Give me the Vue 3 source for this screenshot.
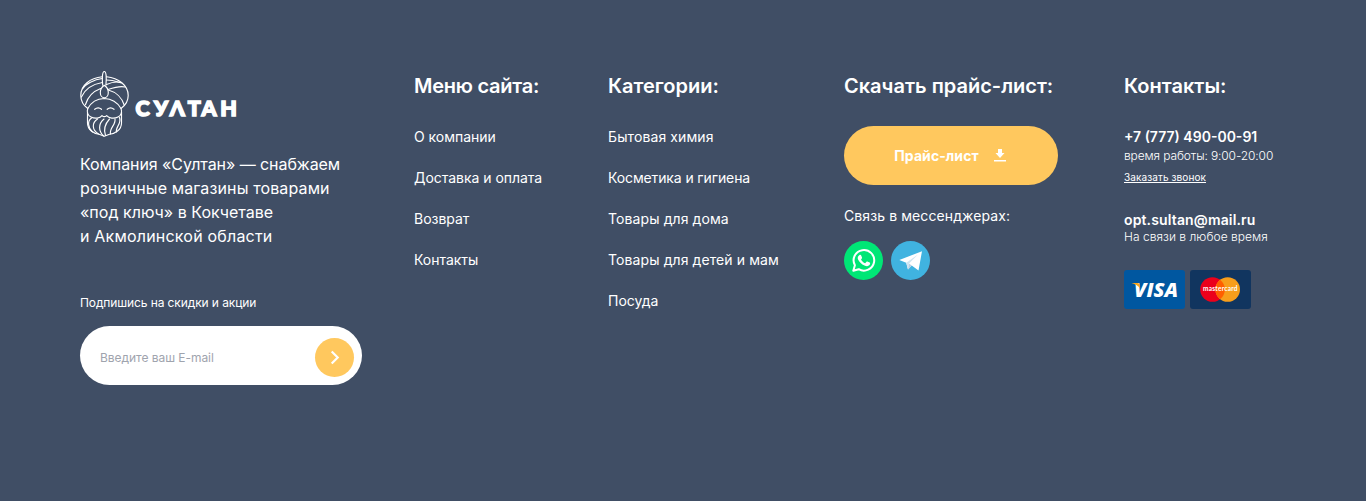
<script setup>
const siteMenu = ['О компании', 'Доставка и оплата', 'Возврат', 'Контакты']
const categories = ['Бытовая химия', 'Косметика и гигиена', 'Товары для дома', 'Товары для детей и мам', 'Посуда']
</script>

<template>
  <footer class="footer">
    <section class="about">
      <svg class="logo" width="158" height="68" viewBox="0 0 158 68" role="img" aria-label="СУЛТАН">
        <g fill="none" stroke="#fff" stroke-width="1.15" stroke-linecap="round" stroke-linejoin="round">
          <path d="M22.3 6.8C10 8 .8 15.300.8 25.500C.8 31 3.500 35.500 7.800 38.500C11 32.500 16 28.800 24.300 28.500C32.500 28.800 37.500 32.500 41 38.500C45.300 35.500 48.200 31 48.200 25.500C48.200 15.300 38.500 8 26.500 6.800" />
          <path d="M22.700 15.200C22 8 22.200 1.500 24.300 1.500S26.600 8 25.900 15.200" />
          <path d="M24.300 15.300C21.800 17 20.300 19.500 20.300 22.500S22 27.800 24.300 27.800S28.300 25.500 28.300 22.500S26.800 17 24.300 15.300Z" />
          <path d="M22.300 8.500C14 9.500 5.500 14 2.400 19" />
          <path d="M22.300 12.500C13.500 14 5 19 1.400 27" />
          <path d="M20.700 18.500C14 21 8 26 5.500 34.500" />
          <path d="M26.500 10C34 10 39 12.500 41.500 13" />
          <path d="M26.500 14.500C31 12.500 37 11.500 41 12.500" />
          <path d="M28 19.500C34 17.500 40 15.500 45 17" />
          <path d="M28.300 20C36 22 42 28 44.200 35" />
          <path d="M7.800 38.500C6.500 42 8 45.500 11 47C15 49 20 48.300 22 45.600Q24.300 47.800 26.600 45.600C29 48.300 34 49 38 47C41 45.500 42.300 42 41 38.500" />
          <path d="M14.700 39.300Q18.200 36.500 21.500 39.300M27.200 39.300Q30.500 36.500 34 39.300" />
          <path d="M7.500 42V53C7.500 60 14 63.500 19 64.300L24.300 66.300L29.500 64.300C35 63.500 41.500 60 41.500 53V42" />
          <path d="M11.500 48C7 51 8 58 12.500 62M17.500 49C11.500 53 12 60 18.500 64M24 49C18 54 18.500 61 23.500 66M29.500 49C25 54 23.500 60 25.500 65.500M35 49C36 55 29 58 30.500 64M39.500 47.500C42 54 35 57 36.500 62" />
        </g>
        <g class="wordmark" aria-hidden="true">
          <text x="55.400 74 89.700 107.800 121.500 140.300" y="45.600">СУΛТАН</text>
        </g>
      </svg>
      <p class="description"><span>Компания «Султан» — снабжаем</span><span>розничные магазины товарами</span><span>«под ключ» в Кокчетаве</span><span>и Акмолинской области</span></p>
      <p class="subscribe-title">Подпишись на скидки и акции</p>
      <form class="subscribe" @submit.prevent>
        <input type="email" placeholder="Введите ваш E-mail" aria-label="E-mail">
        <button class="submit" aria-label="Подписаться">
          <svg width="39" height="39" viewBox="0 0 39 39"><path d="M16.700 13.500L22.700 19.500L16.700 25.500" fill="none" stroke="#fff" stroke-width="2.200" /></svg>
        </button>
      </form>
    </section>

    <nav class="menu">
      <h2>Меню сайта:</h2>
      <a v-for="item in siteMenu" :key="item">{{ item }}</a>
    </nav>
    <nav class="categories">
      <h2>Категории:</h2>
      <a v-for="item in categories" :key="item">{{ item }}</a>
    </nav>

    <section class="price">
      <h2>Скачать прайс-лист:</h2>
      <button class="download">
        <span>Прайс-лист</span>
        <svg width="12" height="13" viewBox="0 0 12 13" fill="#fff"><path d="M4 0H8V4H10.500L6 9L1.500 4H4ZM0 11H12V12.500H0Z" /></svg>
      </button>
      <p class="messengers-title">Связь в мессенджерах:</p>
      <div class="messengers">
        <svg width="39" height="39" viewBox="0 0 39 39">
          <circle cx="19.500" cy="19.500" r="19.500" fill="#00e676" />
          <path d="M9.300 29.700L10.900 24.300A10.300 10.300 0 1 1 14.700 28.200Z" fill="none" stroke="#fff" stroke-width="2" stroke-linejoin="round" />
          <path d="M15.500 14C16.200 13.600 16.900 13.800 17.200 14.500L18 16.400C18.300 17.100 17.500 17.900 17 18.500C18 20.300 19.400 21.600 21.200 22.300L22.500 20.800C22.900 20.300 23.400 20.500 23.900 20.700L25.700 21.600C26.500 22 26.200 23.300 25.500 24.100C24.200 25.500 22.300 25.300 20.400 24.500C17.500 23.300 15.500 21.100 14.200 18.700C13.300 17 13.800 15 15.500 14Z" fill="#fff" />
        </svg>
        <svg width="39" height="39" viewBox="0 0 39 39">
          <circle cx="19.500" cy="19.500" r="19.500" fill="#40b3e0" />
          <path d="M8.300 19L31 10.200L27.500 29.500L20.700 24.500L17 28.500L15.200 21.800Z" fill="#fff" />
          <path d="M15.200 21.800L27 13.500L18 22.500L17 28.500Z" fill="#d2e5f1" />
          <path d="M18 22.500L20.700 24.500L17 28.500Z" fill="#b5cfe4" />
        </svg>
      </div>
    </section>

    <section class="contacts">
      <h2>Контакты:</h2>
      <strong class="phone">+7 (777) 490-00-91</strong>
      <span class="note">время работы: 9:00-20:00</span>
      <a class="callback">Заказать звонок</a>
      <strong class="email">opt.sultan@mail.ru</strong>
      <span class="note availability">На связи в любое время</span>
      <div class="cards">
        <svg width="61" height="39" viewBox="0 0 61 39" role="img" aria-label="Visa">
          <rect width="61" height="39" rx="3" fill="#0057a0" />
          <text class="visa" x="10" y="26.500" textLength="44" lengthAdjust="spacingAndGlyphs">VISA</text>
          <path d="M7.500 13H13.500Q15.300 13 15.600 14.800L16.300 18.500Q13.500 14.800 7.500 13Z" fill="#faa61a" />
        </svg>
        <svg width="61" height="39" viewBox="0 0 61 39" role="img" aria-label="Mastercard">
          <rect width="61" height="39" rx="3" fill="#11355f" />
          <circle cx="22.500" cy="19.500" r="12.300" fill="#eb001b" />
          <circle cx="37.700" cy="19.500" r="12.300" fill="#f79e1b" />
          <path d="M30.100 9.800A12.300 12.300 0 0 1 30.100 29.200A12.300 12.300 0 0 1 30.100 9.800Z" fill="#ff5f00" />
          <text class="mastercard" x="13" y="21.200" textLength="34.500" lengthAdjust="spacing">mastercard</text>
        </svg>
      </div>
    </section>
  </footer>
</template>

<style>
body { background: #404e65; }
</style>

<style scoped>
.footer {
  box-sizing: border-box;
  min-height: 501px;
  padding: 70px 80px 0;
  display: grid;
  grid-template-columns: 334px 194px 236px 280px 1fr;
  background: #404e65;
  color: #fff;
  font-family: Inter, sans-serif;
}
section, nav { display: flex; flex-direction: column; align-items: flex-start; }
h2 { margin: 0 0 28px; padding-top: 4px; font-size: 20px; line-height: 24px; font-weight: 600; white-space: nowrap; }
.menu h2 { letter-spacing: -.25px; }
p { margin: 0; }
.logo { display: block; }
.wordmark { fill: #fff; stroke: #fff; stroke-width: 1.500px; font: 900 21.500px Lato, sans-serif; }
.description { margin-top: 14px; font-size: 16px; line-height: 24px; white-space: nowrap; }
.description span { display: block; letter-spacing: -.07px; }
.description span:nth-child(2) { letter-spacing: .12px; }
.description span:nth-child(3) { letter-spacing: .02px; }
.description span:nth-child(4) { letter-spacing: .2px; }
.subscribe-title { margin-top: 47px; font-size: 12px; line-height: 16px; letter-spacing: -.1px; }
.subscribe { box-sizing: border-box; width: 282px; height: 59px; margin-top: 15px; padding: 4px 8px 0 20px; border-radius: 30px; background: #fff; display: flex; align-items: center; }
.subscribe input { flex: 1; min-width: 0; padding: 0; border: 0; outline: 0; background: transparent; font: 12px Inter, sans-serif; letter-spacing: -.04px; }
.subscribe input::placeholder { color: #9fa4ae; opacity: 1; }
.submit { width: 39px; height: 39px; padding: 0; border: 0; border-radius: 50%; background: #ffc85e; }
.submit svg { display: block; }
nav a { margin-bottom: 19px; font-size: 14px; line-height: 22px; white-space: nowrap; letter-spacing: -.03px; }
.categories a { letter-spacing: .1px; }
.categories a:nth-of-type(2) { letter-spacing: -.12px; }
.categories a:last-child { letter-spacing: 0; }
.download { width: 214px; height: 59px; padding: 0 2px 0 0; border: 0; border-radius: 30px; background: #ffc85e; color: #fff; display: flex; align-items: center; justify-content: center; gap: 15px; font: 700 14px Inter, sans-serif; letter-spacing: .08px; }
.messengers-title { margin-top: 20px; font-size: 14px; line-height: 22px; white-space: nowrap; letter-spacing: .1px; }
.messengers { margin-top: 14px; display: flex; gap: 8px; }
.contacts { white-space: nowrap; }
.phone, .email { font-size: 14px; line-height: 22px; font-weight: 600; }
.note { font-size: 12px; line-height: 16px; font-weight: 300; letter-spacing: -.12px; }
.callback { margin-top: 7px; font-size: 10px; line-height: 12px; letter-spacing: .1px; text-decoration: underline; }
.email { margin-top: 26px; letter-spacing: .14px; }
.availability { margin-top: -2px; letter-spacing: .04px; }
.cards { margin-top: 25px; display: flex; gap: 5px; }
.visa { fill: #fff; font: italic 800 19.500px "Open Sans", sans-serif; }
.mastercard { fill: #fff; font: 700 6.500px Lato, sans-serif; }
</style>
